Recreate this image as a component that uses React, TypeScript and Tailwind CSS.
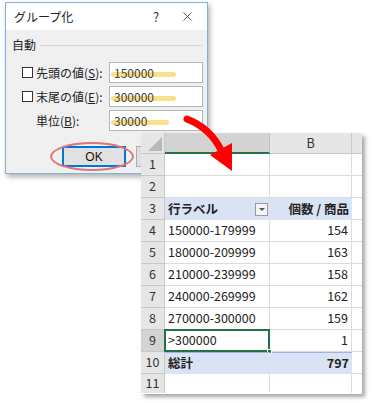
import { X } from 'lucide-react'

const jp = { fontFamily: '"Noto Sans CJK JP", "Noto Sans", sans-serif' }

function Marker({ value }: { value: string }) {
  return (
    <span className="relative inline-block">
      <span className="absolute left-[-3px] right-[-22px] top-[8px] h-[5px] rounded-full bg-[#f7d45a]/70" />
      <span className="relative">{value}</span>
    </span>
  )
}

function FieldRow({ label, keyChar, value, check }: { label: string; keyChar: string; value: string; check: boolean }) {
  return (
    <div className="flex items-center h-[21px]">
      <div className="w-[29px] flex justify-end pr-[3px]">
        {check && <div className="w-[11px] h-[11px] border border-[#333] bg-white" />}
      </div>
      <div className="w-[73px] text-[12px] text-[#222]">
        {label}(<span className="underline">{keyChar}</span>):
      </div>
      <div className="w-[94px] h-[21px] border border-[#b5b5b5] bg-white flex items-center pl-[4px] text-[12px] text-[#444]">
        <Marker value={value} />
      </div>
    </div>
  )
}

const rows: { n: number; a: string; b: string; kind?: 'head' | 'total' | 'sel' }[] = [
  { n: 1, a: '', b: '' },
  { n: 2, a: '', b: '' },
  { n: 3, a: '行ラベル', b: '個数 / 商品', kind: 'head' },
  { n: 4, a: '150000-179999', b: '154' },
  { n: 5, a: '180000-209999', b: '163' },
  { n: 6, a: '210000-239999', b: '158' },
  { n: 7, a: '240000-269999', b: '162' },
  { n: 8, a: '270000-300000', b: '159' },
  { n: 9, a: '>300000', b: '1', kind: 'sel' },
  { n: 10, a: '総計', b: '797', kind: 'total' },
]

function Sheet() {
  return (
    <div className="absolute left-[141px] top-[133px] w-[221px] h-[261px] bg-white shadow-[3px_3px_4px_rgba(0,0,0,0.35)] overflow-hidden text-[12.5px] text-[#222]" style={jp}>
      <div className="grid grid-cols-[24px_105px_82px_10px]">
        {/* header row */}
        <div className="h-[21px] bg-[#e6e6e6] border-r border-b border-[#c8c8c8] flex items-end justify-end p-[2px]">
          <div className="w-0 h-0 border-l-[14px] border-l-transparent border-b-[14px] border-b-[#b8b8b8]" />
        </div>
        <div className="h-[21px] bg-[#d3d3d3] border-r border-[#c0c0c0] border-b-2 border-b-[#217346]" />
        <div className="h-[21px] bg-[#e6e6e6] border-r border-b border-[#c8c8c8] flex items-center justify-center text-[#333]">B</div>
        <div className="h-[21px] bg-[#e6e6e6] border-b border-[#c8c8c8]" />

        {rows.map((r) => {
          const blue = r.kind === 'head' || r.kind === 'total'
          const bold = blue ? 'font-bold' : ''
          return (
            <div key={r.n} className="contents">
              <div className={`h-[22px] border-r border-b border-[#c8c8c8] flex items-center justify-center text-[#333] ${r.kind === 'sel' ? 'bg-[#d3d3d3]' : 'bg-[#e6e6e6]'}`}>
                {r.n}
              </div>
              <div
                className={`relative h-[22px] flex items-center pl-[3px] ${bold} ${blue ? 'bg-[#dae3f3]' : 'bg-white border-r border-b border-[#dcdcdc]'} ${r.kind === 'total' ? 'border-t border-t-[#9db5e0]' : ''}`}
              >
                {r.a}
                {r.kind === 'head' && (
                  <div className="absolute right-[2px] top-[5px] w-[13px] h-[13px] border border-[#9a9a9a] bg-[#f4f4f4] flex items-center justify-center">
                    <div className="w-0 h-0 border-l-[3px] border-r-[3px] border-t-[3px] border-l-transparent border-r-transparent border-t-[#555]" />
                  </div>
                )}
                {r.kind === 'sel' && (
                  <>
                    <div className="absolute inset-[-1px] border-2 border-[#217346]" />
                    <div className="absolute right-[-3px] bottom-[-3px] w-[5px] h-[5px] bg-[#217346] border border-white" />
                  </>
                )}
              </div>
              <div
                className={`h-[22px] flex items-center justify-end pr-[3px] ${bold} ${blue ? 'bg-[#dae3f3]' : 'bg-white border-r border-b border-[#dcdcdc]'} ${r.kind === 'total' ? 'border-t border-t-[#9db5e0]' : ''}`}
              >
                {r.b}
              </div>
              <div className="h-[22px] border-b border-[#dcdcdc] bg-white" />
            </div>
          )
        })}

        <div className="h-[19px] bg-[#e6e6e6] border-r border-[#c8c8c8] flex items-center justify-center text-[#333]">11</div>
        <div className="h-[19px] border-r border-[#dcdcdc]" />
        <div className="h-[19px] border-r border-[#dcdcdc]" />
        <div className="h-[19px]" />
      </div>
    </div>
  )
}

function Dialog() {
  return (
    <div className="absolute left-[5px] top-[2px] w-[203px] h-[172px] border border-[#7fb0de] bg-[#f0f0f0] shadow-[2px_3px_5px_rgba(0,0,0,0.3)] flex flex-col" style={jp}>
      <div className="h-[27px] bg-white flex items-center pl-[8px] text-[12px] text-[#222]">
        <span className="flex-1">グループ化</span>
        <span className="w-[14px] text-[13px] text-[#333]">?</span>
        <span className="w-[40px] flex justify-center">
          <X size={15} strokeWidth={1.2} className="text-[#222]" />
        </span>
      </div>
      <div className="flex items-center pl-[6px] pr-[5px] pt-[6px] text-[12px] text-[#222]">
        <span>自動</span>
        <div className="flex-1 ml-[4px] h-px bg-[#d5d5d5]" />
      </div>
      <div className="flex flex-col gap-[3px] pt-[8px] pl-[1px]">
        <FieldRow check label="先頭の値" keyChar="S" value="150000" />
        <FieldRow check label="末尾の値" keyChar="E" value="300000" />
        <FieldRow check={false} label="単位" keyChar="B" value="30000" />
      </div>
      <div className="flex items-center gap-[10px] pl-[56px] pt-[15px]">
        <div className="relative">
          <div className="w-[64px] h-[21px] bg-[#e1e1e1] border-2 border-[#0078d7] flex items-center justify-center text-[12px] text-[#111]" style={{ fontFamily: '"Liberation Sans", sans-serif' }}>
            OK
          </div>
          <div className="absolute left-[-12px] top-[-4px] w-[84px] h-[29px] rounded-[50%] border-2 border-[#e57373]" />
        </div>
        <div className="w-[64px] h-[21px] bg-[#e1e1e1] border border-[#adadad]" />
      </div>
    </div>
  )
}

export default function App() {
  return (
    <div className="relative w-[373px] h-[403px] bg-white overflow-hidden">
      <Dialog />
      <Sheet />
      <svg className="absolute left-0 top-0" width="373" height="403" viewBox="0 0 373 403">
        <path d="M187 119 Q210 128 221 150" fill="none" stroke="#ff0000" strokeWidth="7" strokeLinecap="round" />
        <polygon points="210,155 232,143 232,171" fill="#ff0000" />
      </svg>
    </div>
  )
}
